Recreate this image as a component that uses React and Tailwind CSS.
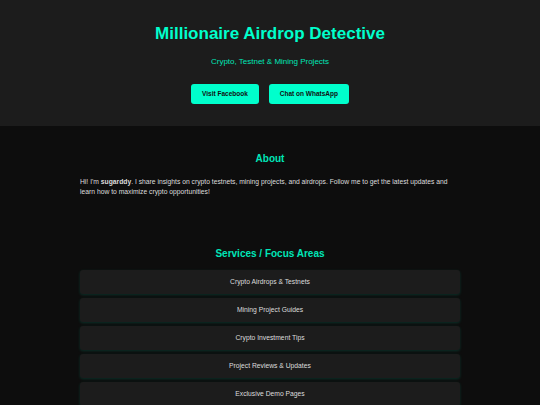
export default function App() {
  const services = [
    'Crypto Airdrops & Testnets',
    'Mining Project Guides',
    'Crypto Investment Tips',
    'Project Reviews & Updates',
    'Exclusive Demo Pages',
  ];

  return (
    <div className="min-h-screen bg-[#0d0d0d] text-[#dddddd]" style={{ fontFamily: '"Liberation Sans", Arial, sans-serif' }}>
      {/* header */}
      <header className="bg-[#1c1c1c] pt-[24px] pb-[22px] text-center">
        <h1 className="text-[17px] font-bold leading-[20px] text-[#00ffcc]">Millionaire Airdrop Detective</h1>
        <p className="mt-[13px] text-[8px] leading-[10px] text-[#00e6b8]">Crypto, Testnet &amp; Mining Projects</p>
        <div className="mt-[17px] flex justify-center gap-[10px]">
          <a className="flex h-[20px] items-center rounded-[3px] bg-[#00ffcc] px-[11px] text-[6.5px] font-bold text-[#111111]">
            Visit Facebook
          </a>
          <a className="flex h-[20px] items-center rounded-[3px] bg-[#00ffcc] px-[11px] text-[6.5px] font-bold text-[#111111]">
            Chat on WhatsApp
          </a>
        </div>
      </header>

      <main className="mx-auto w-[380px] pt-[27px]">
        <section>
          <h2 className="text-center text-[10px] font-bold leading-[12px] text-[#00e6b8]">About</h2>
          <p className="mt-[12px] text-[6.75px] leading-[10px] text-[#dddddd]">
            Hi! I'm <strong>sugarddy</strong>. I share insights on crypto testnets, mining projects, and airdrops. Follow me to get the latest updates and learn how to maximize crypto opportunities!
          </p>
        </section>

        <section className="mt-[51px]">
          <h2 className="text-center text-[10px] font-bold leading-[12px] text-[#00e6b8]">Services / Focus Areas</h2>
          <ul className="mt-[10px] flex flex-col gap-[4px]">
            {services.map((s) => (
              <li
                key={s}
                className="flex h-[24px] items-center justify-center rounded-[3px] bg-[#1c1c1c] text-[6.75px] text-[#dddddd] shadow-[0_1px_3px_rgba(0,255,204,0.15)]"
              >
                {s}
              </li>
            ))}
          </ul>
        </section>
      </main>
    </div>
  );
}
